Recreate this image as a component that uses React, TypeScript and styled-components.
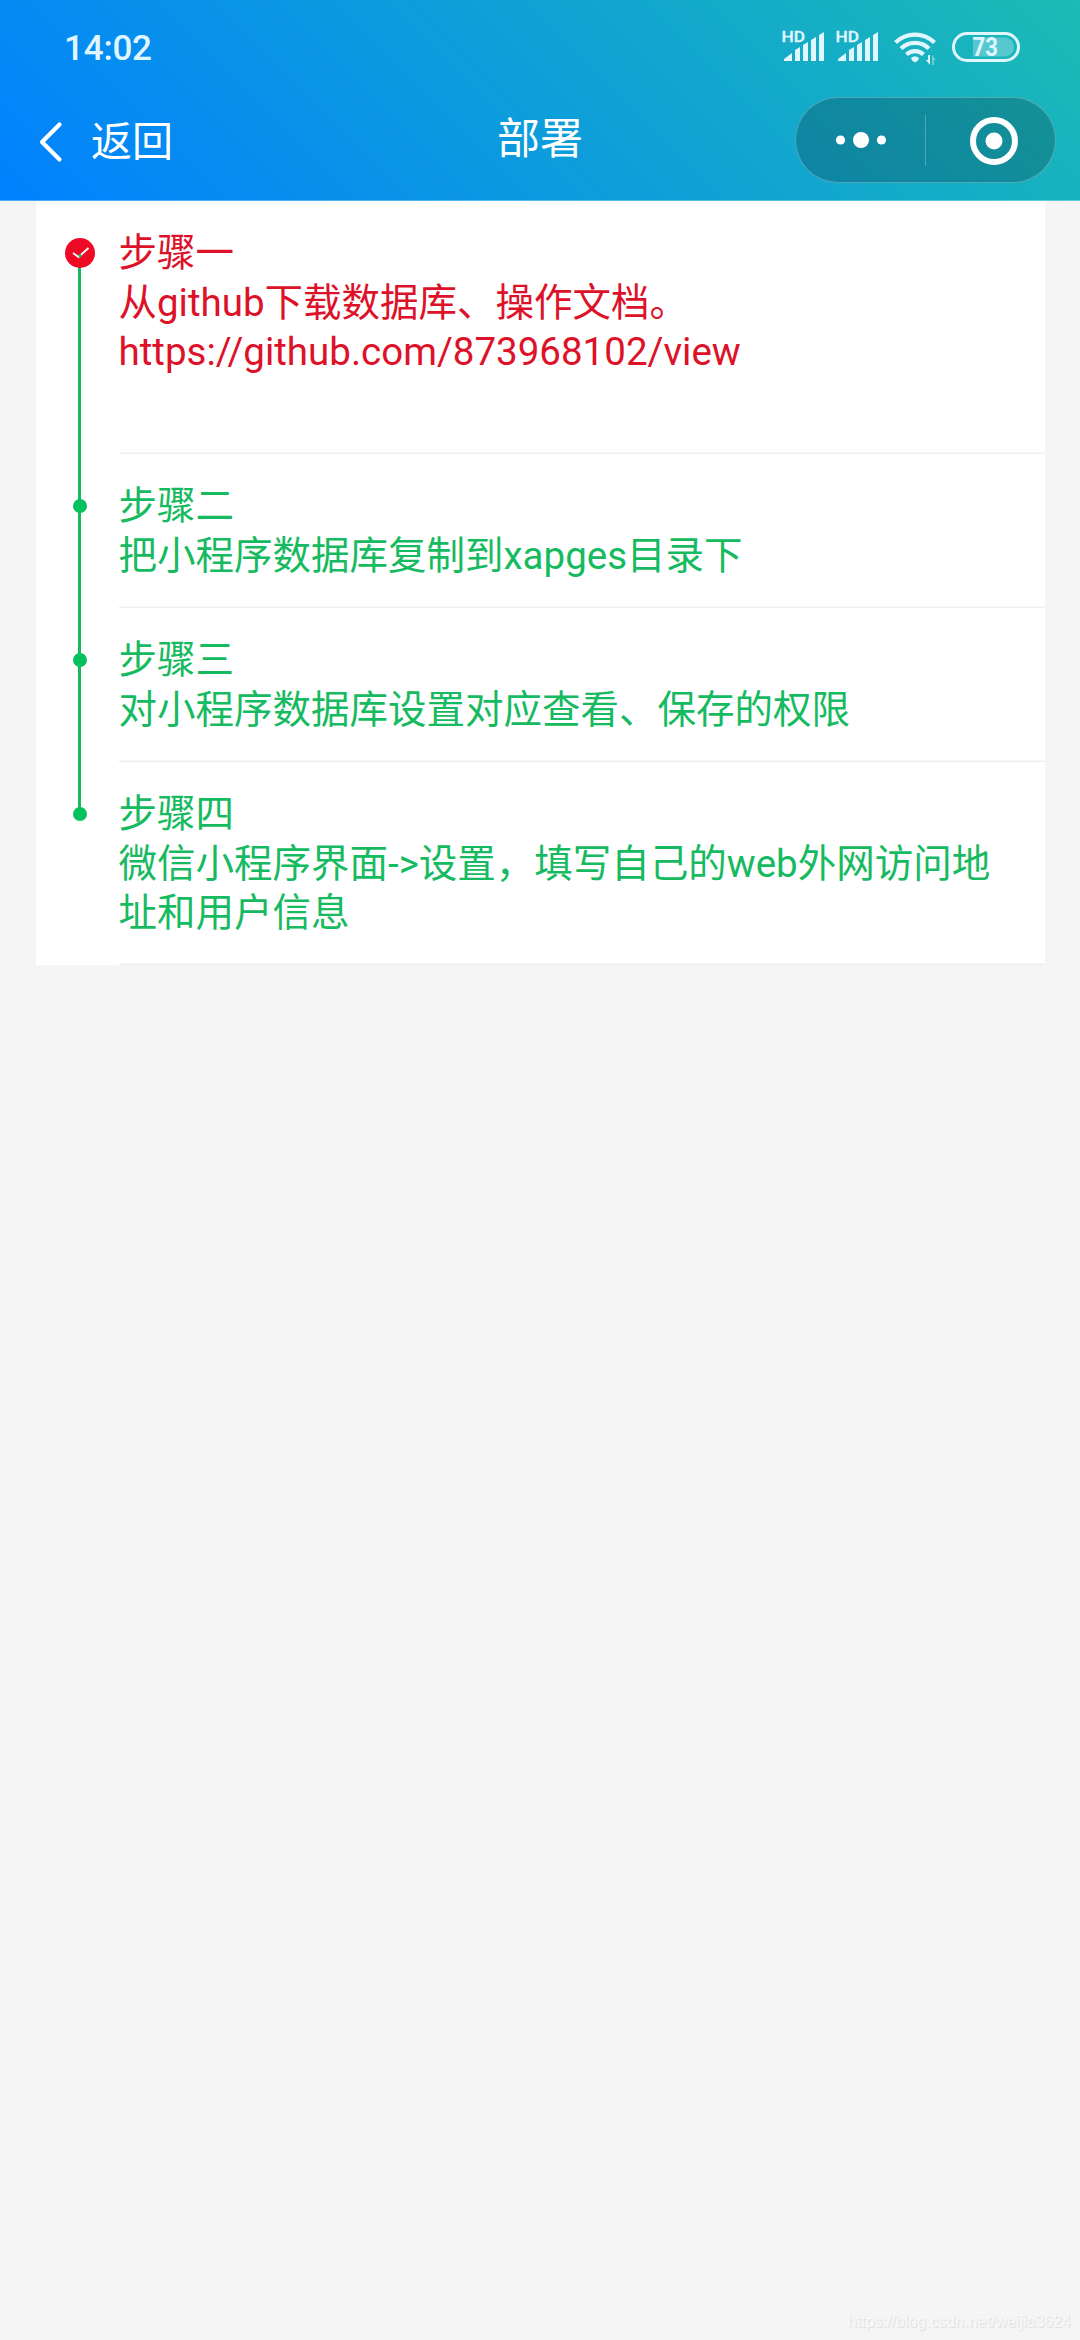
import React from 'react';
import styled, { createGlobalStyle } from 'styled-components';

const GlobalStyle = createGlobalStyle`
  *, *::before, *::after { box-sizing: border-box; }
  body { margin: 0; background: #f5f5f5; }
`;

const Page = styled.div`
  display: flex;
  flex-direction: column;
  width: 1080px;
  height: 2340px;
  background: #f5f5f5;
  font-family: Roboto, 'Noto Sans CJK SC', sans-serif;
  overflow: hidden;
`;

const Header = styled.header`
  position: relative;
  z-index: 1;
  flex: none;
  height: 201px;
  background: linear-gradient(45deg, #0081ff, #1cbbb4);
  box-shadow: inset 0 -1px 0 rgba(255, 255, 255, 0.3);
  color: #fff;
`;

const StatusBar = styled.div`
  display: flex;
  align-items: center;
  justify-content: space-between;
  height: 94px;
  padding: 0 60px 0 64px;
  color: #e0f6ff;
`;

const Clock = styled.span`
  padding-top: 3px;
  font-size: 35px;
  font-weight: 500;
  line-height: 40px;
  letter-spacing: -0.2px;
`;

const NavBar = styled.div`
  display: grid;
  grid-template-columns: 1fr auto 1fr;
  align-items: center;
  height: 92px;
  padding: 0 24px;
`;

const BackButton = styled.div`
  display: flex;
  align-items: center;
  gap: 25px;
  padding: 3px 0 0 12px;
  font-size: 41px;
  line-height: 60px;
`;

const Title = styled.h1`
  margin: 0;
  padding-bottom: 2px;
  font-size: 43px;
  font-weight: 400;
  line-height: 60px;
`;

const Capsule = styled.div`
  display: grid;
  grid-template-columns: 1fr 1px 1fr;
  align-items: center;
  justify-items: center;
  justify-self: end;
  width: 261px;
  height: 86px;
  border: 1px solid rgba(255, 255, 255, 0.25);
  border-radius: 43px;
  background: rgba(0, 0, 0, 0.2);
`;

const CapsuleDivider = styled.span`
  width: 1px;
  height: 51px;
  background: rgba(255, 255, 255, 0.25);
`;

const CloseButton = styled.span`
  display: flex;
  padding: 2px 0 0 6px;
`;

const Steps = styled.main`
  flex: none;
  width: 1009px;
  margin: -0.5px 0 0 36px;
  padding-left: 82.5px;
  background: #fff;
`;

const Step = styled.section<{ $active?: boolean }>`
  position: relative;
  padding: 27.5px 27.5px 27.5px 0;
  font-size: 38.5px;
  line-height: 49.5px;
  color: ${(p) => (p.$active ? '#dd1229' : '#16ba60')};
  box-shadow: inset 0 -1.5px 0 #efefef;
`;

const StepTitle = styled.h2`
  margin: 0;
  font: inherit;
`;

const StepText = styled.p<{ $extraLine?: boolean }>`
  margin: 0;
  padding-bottom: ${(p) => (p.$extraLine ? '49.5px' : '0')};
  white-space: pre-line;
`;

const Track = styled.span`
  position: absolute;
  top: 52px;
  left: -40.5px;
  width: 3px;
  height: 100%;
  background: #16ba60;
`;

const Marker = styled.span<{ $active?: boolean }>`
  position: absolute;
  z-index: 1;
  top: 52.5px;
  left: -39px;
  display: flex;
  width: ${(p) => (p.$active ? 30 : 14)}px;
  height: ${(p) => (p.$active ? 30 : 14)}px;
  border-radius: 50%;
  background: ${(p) => (p.$active ? '#ee0a24' : '#07c160')};
  transform: translate(-50%, -50%);
`;

const Watermark = styled.footer`
  margin-top: auto;
  padding: 0 9px 8px 0;
  font-family: 'Liberation Sans', sans-serif;
  font-size: 16px;
  line-height: 20px;
  text-align: right;
  color: #f8f8f8;
  text-shadow: 1px 1px 1px #dadada;
`;

const steps = [
  { title: '步骤一', text: '从github下载数据库、操作文档。\nhttps://github.com/873968102/view', active: true },
  { title: '步骤二', text: '把小程序数据库复制到xapges目录下' },
  { title: '步骤三', text: '对小程序数据库设置对应查看、保存的权限' },
  { title: '步骤四', text: '微信小程序界面->设置，填写自己的web外网访问地址和用户信息' },
];

const StatusIcons = () => (
  <svg width="240" height="44" viewBox="780 25 240 44" fill="#e0f6ff">
    {[0, 54].map((dx) => (
      <g key={dx} transform={`translate(${dx} 0)`}>
        <text x="781.500" y="42" fontFamily="Roboto, sans-serif" fontSize="15.500" fontWeight="500" stroke="#e0f6ff" strokeWidth="0.300" textLength="23.500" lengthAdjust="spacingAndGlyphs">HD</text>
        <path d="M784 61v-2l8-6v8zM795 61V50l5-3v14zM803 61V45l5-3v19zM811 61V40l5-3v24zM819 61V35l5-3v29z" />
      </g>
    ))}
    <g fill="none" stroke="#e0f6ff" strokeWidth="4.200">
      <path d="M895.500 42.500a28 28 0 0 1 39 0M901 48.500a20 20 0 0 1 28 0M906.500 54.500a12.500 12.500 0 0 1 17 0" />
    </g>
    <path d="M911 58q4-3.500 8 0l-1 2.500-3 2-3-2z" />
    <path d="M928 55h2v10l-4-5h2z" />
    <path d="M932 65V55l4 5h-2v5z" opacity=".4" />
    <path d="M973 37.500h31.500a9.500 9.500 0 0 1 0 19H973z" opacity=".3" />
    <rect x="953.500" y="33.500" width="65" height="27" rx="13.500" fill="none" stroke="#e0f6ff" strokeWidth="3" />
    <text x="972.500" y="56" fontFamily="Roboto, sans-serif" fontSize="25" fontWeight="700" textLength="25.500" lengthAdjust="spacingAndGlyphs">73</text>
  </svg>
);

const App = () => (
  <Page>
    <GlobalStyle />
    <Header>
      <StatusBar>
        <Clock>14:02</Clock>
        <StatusIcons />
      </StatusBar>
      <NavBar>
        <BackButton>
          <svg width="30" height="44" viewBox="36 119.500 30 44" fill="none" stroke="#fff" strokeWidth="4.200" strokeLinecap="round" strokeLinejoin="round">
            <path d="M59.500 124L42 141.500L59.500 159" />
          </svg>
          返回
        </BackButton>
        <Title>部署</Title>
        <Capsule>
          <svg width="52" height="18" viewBox="0 0 52 18" fill="#fff">
            <circle cx="5.500" cy="9" r="4.600" />
            <circle cx="26" cy="9" r="8" />
            <circle cx="46.500" cy="9" r="4.600" />
          </svg>
          <CapsuleDivider />
          <CloseButton>
            <svg width="50" height="50" viewBox="0 0 50 50">
              <circle cx="25" cy="25" r="21" fill="none" stroke="#fff" strokeWidth="6" />
              <circle cx="25" cy="25" r="8.500" fill="#fff" />
            </svg>
          </CloseButton>
        </Capsule>
      </NavBar>
    </Header>
    <Steps>
      {steps.map((s, i) => (
        <Step key={s.title} $active={s.active}>
          {i < steps.length - 1 && <Track />}
          <Marker $active={s.active}>
            {s.active && (
              <svg width="30" height="30" viewBox="0 0 30 30" fill="none" stroke="#fff" strokeWidth="1.800">
                <path d="M8 15L13.500 19L23.500 10" />
                <path d="M15 16.200v3" stroke="#16ba60" strokeWidth="2.400" />
              </svg>
            )}
          </Marker>
          <StepTitle>{s.title}</StepTitle>
          <StepText $extraLine={s.active}>{s.text}</StepText>
        </Step>
      ))}
    </Steps>
    <Watermark>https://blog.csdn.net/weijia3624</Watermark>
  </Page>
);

export default App;
